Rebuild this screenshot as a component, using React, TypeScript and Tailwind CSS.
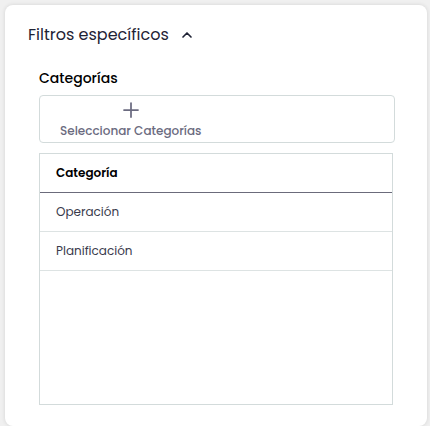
import { Plus, ChevronUp } from 'lucide-react';

const rows = ['Operación', 'Planificación'];

export default function App() {
  return (
    <div className="min-h-screen bg-[#f0f0f0] pl-[5px] pr-[3px] pt-[5px] font-['Poppins',sans-serif]">
      <div className="bg-white rounded-lg shadow-[0_0_4px_rgba(0,0,0,0.12)] h-[421px] pl-[23px] pr-[32px] pt-[16px]">
        {/* Header */}
        <div className="flex items-center h-[28px]">
          <h2 className="text-[16px] text-[#1f2335] leading-[28px]">Filtros específicos</h2>
          <ChevronUp className="w-4 h-4 ml-[10px] text-[#1f2335]" strokeWidth={2.5} />
        </div>

        <div className="pl-[11px] mt-[18px]">
          <h3 className="text-[14px] font-medium text-black leading-[22px]">Categorías</h3>

          {/* Select button */}
          <div className="mt-[6px] border border-[#d3dbdb] rounded h-[48px] flex">
            <button className="flex flex-col items-center px-[20px] pt-[2px] text-[#6b6b80]">
              <Plus className="w-6 h-6" strokeWidth={1.75} />
              <span className="text-[12px] font-medium leading-[18px]">Seleccionar Categorías</span>
            </button>
          </div>

          {/* Table */}
          <div className="mt-[10px] mr-[2px] border border-[#d3dbdb] h-[252px]">
            <div className="h-[39px] flex items-center px-[16px] border-b border-[#6b6b7b]">
              <span className="text-[12px] font-semibold text-black">Categoría</span>
            </div>
            {rows.map((r) => (
              <div key={r} className="h-[39px] flex items-center px-[16px] border-b border-[#dde3e3]">
                <span className="text-[12px] text-[#3a3a4c]">{r}</span>
              </div>
            ))}
          </div>
        </div>
      </div>
    </div>
  );
}
